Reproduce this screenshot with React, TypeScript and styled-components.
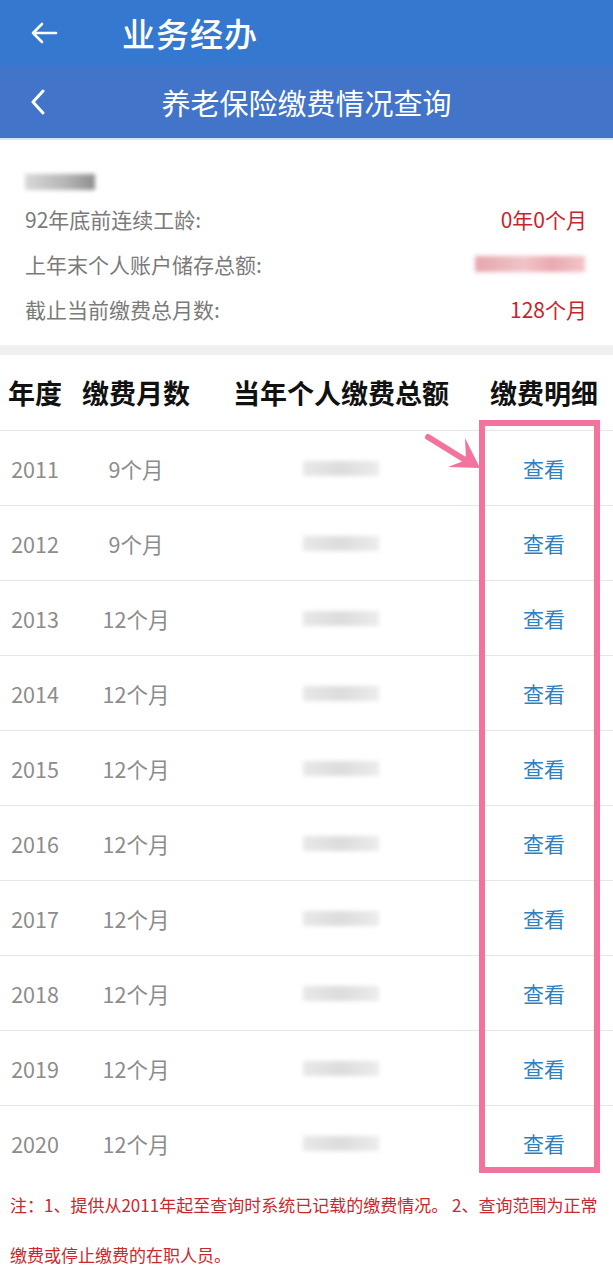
import React from "react";
import styled, { createGlobalStyle } from "styled-components";

const GlobalStyle = createGlobalStyle`
  html, body {
    margin: 0;
    padding: 0;
    background: #fff;
  }
  body {
    font-family: "Noto Sans CJK SC", "Noto Sans", sans-serif;
  }
  *, *::before, *::after {
    box-sizing: border-box;
  }
`;

const Page = styled.div`
  width: 613px;
  background: #fff;
  overflow: hidden;
`;

const TopBar = styled.div`
  height: 66px;
  background: #3478d0;
  display: flex;
  align-items: center;
  padding-left: 30px;
  color: #fff;
`;

const TopTitle = styled.div`
  margin-left: 64px;
  font-size: 33px;
  font-weight: 500;
  letter-spacing: 1px;
`;

const SubBar = styled.div`
  height: 74px;
  background: #4274c9;
  display: flex;
  align-items: center;
  color: #fff;
  border-bottom: 2px solid #d6e6f7;
`;

const BackChevron = styled.div`
  width: 90px;
  padding-left: 30px;
  display: flex;
  align-items: center;
`;

const SubTitle = styled.div`
  flex: 1;
  text-align: center;
  margin-right: 90px;
  font-size: 29px;
  font-weight: 400;
`;

const Info = styled.div`
  padding: 20px 28px 14px 25px;
`;

const BlurBlock = styled.div<{ $w: number; $h: number; $tone: string }>`
  width: ${(p) => p.$w}px;
  height: ${(p) => p.$h}px;
  background: ${(p) => p.$tone};
  filter: blur(2px);
`;

const NameRow = styled.div`
  height: 30px;
  margin-bottom: 6px;
  display: flex;
  align-items: flex-end;
`;

const InfoRow = styled.div`
  height: 45px;
  display: flex;
  align-items: center;
  justify-content: space-between;
  font-size: 21px;
`;

const Label = styled.span`
  color: #7a7a7a;
`;

const Value = styled.span`
  color: #c8232c;
  margin-right: -2px;
`;

const Divider = styled.div`
  height: 10px;
  background: #f0f0f0;
`;

const Table = styled.div`
  position: relative;
`;

const Row = styled.div<{ $head?: boolean }>`
  height: 75px;
  display: grid;
  grid-template-columns: 70px 132px 278px 128px;
  align-items: center;
  border-top: ${(p) => (p.$head ? "none" : "1.5px solid #e6e6e6")};
`;

const HeadCell = styled.div`
  text-align: center;
  font-size: 27px;
  font-weight: 700;
  color: #111;
`;

const Cell = styled.div`
  text-align: center;
  font-size: 21.5px;
  color: #8c8c8c;
  display: flex;
  justify-content: center;
`;

const ViewLink = styled.a`
  font-size: 21px;
  color: #2e80c2;
  text-decoration: none;
  text-align: center;
`;

const Highlight = styled.div`
  position: absolute;
  left: 479px;
  top: 65px;
  width: 121px;
  height: 753px;
  border: 6px solid #f2739b;
  pointer-events: none;
`;

const Pointer = styled.svg`
  position: absolute;
  left: 420px;
  top: 75px;
  pointer-events: none;
`;

const Note = styled.p`
  margin: 0;
  padding: 0 10px;
  font-size: 17px;
  line-height: 50px;
  color: #c9282d;
`;

const records = [
  { year: "2011", months: "9个月" },
  { year: "2012", months: "9个月" },
  { year: "2013", months: "12个月" },
  { year: "2014", months: "12个月" },
  { year: "2015", months: "12个月" },
  { year: "2016", months: "12个月" },
  { year: "2017", months: "12个月" },
  { year: "2018", months: "12个月" },
  { year: "2019", months: "12个月" },
  { year: "2020", months: "12个月" },
];

export default function App() {
  return (
    <Page>
      <GlobalStyle />
      <TopBar>
        <svg width="28" height="24" viewBox="0 0 28 24" fill="none" stroke="#fff" strokeWidth="2.6" strokeLinecap="round" strokeLinejoin="round">
          <path d="M26 12H3M12 3L3 12l9 9" />
        </svg>
        <TopTitle>业务经办</TopTitle>
      </TopBar>
      <SubBar>
        <BackChevron>
          <svg width="16" height="26" viewBox="0 0 16 26" fill="none" stroke="#fff" strokeWidth="3" strokeLinecap="round" strokeLinejoin="round">
            <path d="M13 2L3 13l10 11" />
          </svg>
        </BackChevron>
        <SubTitle>养老保险缴费情况查询</SubTitle>
      </SubBar>

      <Info>
        <NameRow>
          <BlurBlock $w={70} $h={16} $tone="linear-gradient(90deg,#d8d8d8 0%,#b4b4b4 60%,#8e8e8e 100%)" />
        </NameRow>
        <InfoRow>
          <Label>92年底前连续工龄:</Label>
          <Value>0年0个月</Value>
        </InfoRow>
        <InfoRow>
          <Label>上年末个人账户储存总额:</Label>
          <BlurBlock $w={110} $h={16} $tone="linear-gradient(90deg,#e6a6ad,#f0c4c8 45%,#e9a9b0 70%,#f2c6ca)" />
        </InfoRow>
        <InfoRow>
          <Label>截止当前缴费总月数:</Label>
          <Value>128个月</Value>
        </InfoRow>
      </Info>
      <Divider />

      <Table>
        <Row $head>
          <HeadCell>年度</HeadCell>
          <HeadCell>缴费月数</HeadCell>
          <HeadCell>当年个人缴费总额</HeadCell>
          <HeadCell>缴费明细</HeadCell>
        </Row>
        {records.map((r) => (
          <Row key={r.year}>
            <Cell>{r.year}</Cell>
            <Cell>{r.months}</Cell>
            <Cell>
              <BlurBlock $w={76} $h={15} $tone="linear-gradient(90deg,#e8e8e8,#dcdcdc 50%,#ececec)" />
            </Cell>
            <Cell>
              <ViewLink>查看</ViewLink>
            </Cell>
          </Row>
        ))}
        <Highlight />
        <Pointer width="62" height="42" viewBox="0 0 62 42">
          <path d="M8 7L50 33" stroke="#f2739b" strokeWidth="6" strokeLinecap="round" />
          <path d="M60 38L28 37L46 30L45 8Z" fill="#f2739b" />
        </Pointer>
      </Table>

      <Note>
        注：1、提供从2011年起至查询时系统已记载的缴费情况。 2、查询范围为正常缴费或停止缴费的在职人员。
      </Note>
    </Page>
  );
}
